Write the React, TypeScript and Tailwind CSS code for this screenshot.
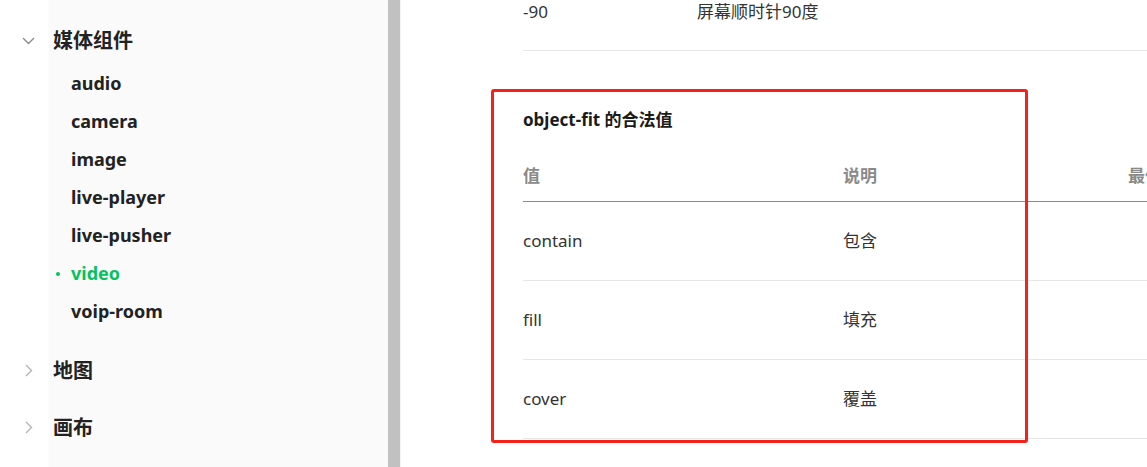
import React from "react";

const ChevronDown = () => (
  <svg width="13" height="8" viewBox="0 0 13 8" fill="none">
    <polyline points="1,1 6.5,6.5 12,1" stroke="#8c8c8c" strokeWidth="1.4" />
  </svg>
);

const ChevronRight = () => (
  <svg width="8" height="13" viewBox="0 0 8 13" fill="none">
    <polyline points="1,1 6.5,6.5 1,12" stroke="#b5b5b5" strokeWidth="1.4" />
  </svg>
);

const items = ["audio", "camera", "image", "live-player", "live-pusher", "video", "voip-room"];

function Sidebar() {
  return (
    <div className="w-[388px] shrink-0 h-full flex bg-[#fafafa]">
      <div className="w-full pt-[19px] bg-gradient-to-r from-white from-[12%] to-[#fafafa] to-[13%]">
        <div className="h-[44px] flex items-center">
          <div className="w-[53px] pl-[22px] flex items-center">
            <ChevronDown />
          </div>
          <span className="text-[20px] font-bold text-[#222]">媒体组件</span>
        </div>
        <div className="pt-[1px] pb-[12px]">
          {items.map((it) => (
            <div key={it} className="h-[38px] flex items-center pl-[71px] relative">
              {it === "video" && (
                <span className="absolute left-[56px] top-[18px] w-[4px] h-[4px] rounded-full bg-[#07c160]" />
              )}
              <span
                className={
                  "text-[18px] font-bold " + (it === "video" ? "text-[#07c160]" : "text-[#222]")
                }
              >
                {it}
              </span>
            </div>
          ))}
        </div>
        {["地图", "画布"].map((g) => (
          <div key={g} className="h-[57px] flex items-center">
            <div className="w-[53px] pl-[25px] flex items-center">
              <ChevronRight />
            </div>
            <span className="text-[20px] font-bold text-[#222]">{g}</span>
          </div>
        ))}
      </div>
    </div>
  );
}

export default function App() {
  return (
    <div
      className="w-[1147px] h-[467px] overflow-hidden flex bg-white"
      style={{ fontFamily: '"Noto Sans", "Noto Sans CJK SC", sans-serif' }}
    >
      <Sidebar />
      <div className="w-[12px] shrink-0 h-full bg-[#c1c1c1]" />
      <div className="w-[1px] shrink-0 h-full bg-[#f3f3f3]" />
      <div className="flex-1 relative min-w-0 overflow-hidden">
        <div className="pl-[122px] w-[900px] text-[17px] text-[#333]">
          <div className="h-[51px] flex items-start border-b border-[#e6e6e6] leading-[24px]">
            <span className="w-[174px]">-90</span>
            <span>屏幕顺时针90度</span>
          </div>
          <div className="mt-[57px] font-bold text-[#1a1a1a] leading-[24px]">object-fit 的合法值</div>
          <div className="mt-[32px] flex pb-[13px] border-b border-[#8a8a8a] leading-[24px] font-bold text-[#8a8a8a]">
            <span className="w-[320px] shrink-0">值</span>
            <span className="w-[285px] shrink-0">说明</span>
            <span className="shrink-0">最低版本</span>
          </div>
          {[
            ["contain", "包含"],
            ["fill", "填充"],
            ["cover", "覆盖"],
          ].map(([a, b]) => (
            <div key={a} className="flex py-[27px] leading-[24px] border-b border-[#e6e6e6]">
              <span className="w-[320px] shrink-0">{a}</span>
              <span className="w-[285px] shrink-0">{b}</span>
            </div>
          ))}
        </div>
        <div className="absolute left-[90px] top-[89px] w-[537px] h-[354px] border-[3px] border-[#f5221b] rounded-[3px] pointer-events-none" />
      </div>
    </div>
  );
}
